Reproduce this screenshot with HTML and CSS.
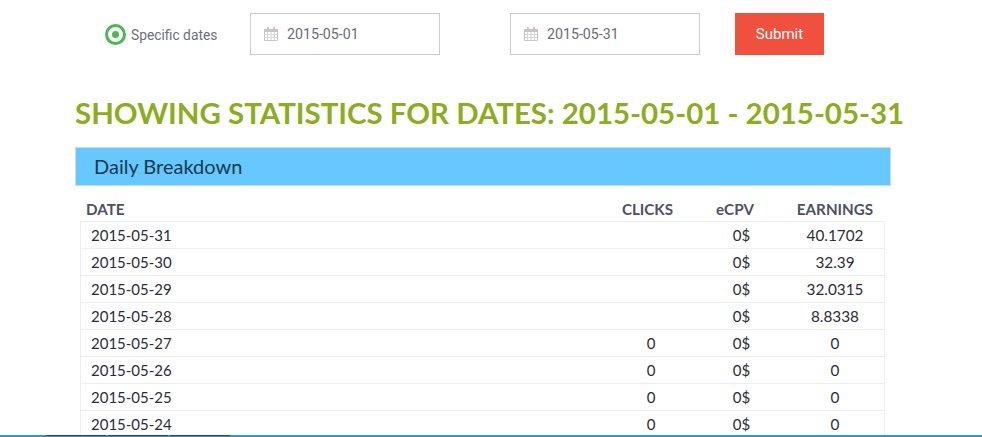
FILE: index.html
```html
<!DOCTYPE html>
<html lang="en">
<head>
<meta charset="utf-8">
<title>Statistics</title>
<link rel="stylesheet" href="styles.css">
</head>
<body>
<main class="page">
  <form class="filter">
    <span class="radio"><span class="radio-dot"></span></span>
    <span class="radio-label">Specific dates</span>
    <div class="date-input first">
      <svg class="cal" viewBox="0 0 14 14" width="14" height="14"><path d="M.5 2.500h13v11H.5z" fill="#fff" stroke="#c9c5c5"/><path d="M0 2h14v3H0z" fill="#c9c5c5"/><path d="M3 0h2v3H3zM9 0h2v3H9z" fill="#c9c5c5"/><path d="M3.500 5v8M7 5v8M10.500 5v8M1 7.500h12M1 10.500h12" stroke="#d8d5d5" fill="none"/></svg>
      <span>2015-05-01</span>
    </div>
    <div class="date-input second">
      <svg class="cal" viewBox="0 0 14 14" width="14" height="14"><path d="M.5 2.500h13v11H.5z" fill="#fff" stroke="#c9c5c5"/><path d="M0 2h14v3H0z" fill="#c9c5c5"/><path d="M3 0h2v3H3zM9 0h2v3H9z" fill="#c9c5c5"/><path d="M3.500 5v8M7 5v8M10.500 5v8M1 7.500h12M1 10.500h12" stroke="#d8d5d5" fill="none"/></svg>
      <span>2015-05-31</span>
    </div>
    <button class="submit" type="button">Submit</button>
  </form>
  <h1 class="title">SHOWING STATISTICS FOR DATES: 2015-05-01 - 2015-05-31</h1>
  <section class="panel">
    <h2 class="panel-head">Daily Breakdown</h2>
    <div class="table-head">
      <span class="c-date">DATE</span><span class="c-clicks">CLICKS</span><span class="c-ecpv">eCPV</span><span class="c-earn">EARNINGS</span>
    </div>
    <div class="rows">
      <div class="row"><span class="c-date">2015-05-31</span><span class="c-clicks"></span><span class="c-ecpv">0$</span><span class="c-earn">40.1702</span></div>
      <div class="row"><span class="c-date">2015-05-30</span><span class="c-clicks"></span><span class="c-ecpv">0$</span><span class="c-earn">32.39</span></div>
      <div class="row"><span class="c-date">2015-05-29</span><span class="c-clicks"></span><span class="c-ecpv">0$</span><span class="c-earn">32.0315</span></div>
      <div class="row"><span class="c-date">2015-05-28</span><span class="c-clicks"></span><span class="c-ecpv">0$</span><span class="c-earn">8.8338</span></div>
      <div class="row"><span class="c-date">2015-05-27</span><span class="c-clicks">0</span><span class="c-ecpv">0$</span><span class="c-earn">0</span></div>
      <div class="row"><span class="c-date">2015-05-26</span><span class="c-clicks">0</span><span class="c-ecpv">0$</span><span class="c-earn">0</span></div>
      <div class="row"><span class="c-date">2015-05-25</span><span class="c-clicks">0</span><span class="c-ecpv">0$</span><span class="c-earn">0</span></div>
      <div class="row"><span class="c-date">2015-05-24</span><span class="c-clicks">0</span><span class="c-ecpv">0$</span><span class="c-earn">0</span></div>
    </div>
  </section>
</main>
<div class="bottom-bar">
  <span class="bar-tab"></span><span class="bar-tab"></span><span class="bar-tab"></span>
</div>
</body>
</html>
```
FILE: styles.css
```css
html, body { margin: 0; padding: 0; height: 437px; overflow: hidden; background: #fff; }
body { font-family: Lato, sans-serif; color: #2c2c3a; display: flex; flex-direction: column; }
.page { height: 435px; overflow: hidden; padding: 13px 0 0 75px; box-sizing: border-box; flex: none; }
.filter { display: flex; align-items: center; height: 42px; padding-left: 30px; font-family: Roboto, sans-serif; }
.radio { width: 21px; height: 21px; border: 3px solid #4cb850; border-radius: 50%; box-sizing: border-box; display: flex; align-items: center; justify-content: center; flex: none; }
.radio-dot { width: 7px; height: 7px; background: #4cb850; border-radius: 50%; }
.radio-label { font-size: 13.8px; color: #6b6f78; margin-left: 5px; width: 86px; margin-top: 2px; flex: none; white-space: nowrap; }
.date-input { width: 190px; height: 42px; border: 1px solid #ccc; box-sizing: border-box; display: flex; align-items: center; padding-left: 13px; font-size: 14.2px; color: #6b6b73; flex: none; }
.date-input.first { margin-left: 33px; }
.date-input.second { margin-left: 70px; }
.cal { margin-right: 9px; flex: none; }
.submit { width: 89px; height: 42px; margin-left: 35px; border: 0; background: #f0503e; color: #fff; font: 15px Roboto, sans-serif; padding: 0; }
.title { margin: 40px 0 0; font-size: 29.45px; line-height: 36px; font-weight: 700; color: #8bad1f; white-space: nowrap; }
.panel { width: 816px; margin-top: 16px; }
.panel-head { margin: 0; height: 39px; box-sizing: border-box; background: #66c8ff; border: 1px solid #c5dff0; font-size: 20px; font-weight: 400; line-height: 36px; padding-left: 18px; color: #173a4e; }
.table-head { display: flex; height: 35px; box-sizing: border-box; padding: 14px 6px 0 5px; font-size: 15.2px; line-height: 18px; font-weight: 700; color: #4c5264; }
.table-head .c-date { padding-left: 6px; }
.table-head .c-clicks { width: 75px; }
.table-head .c-ecpv { width: 100px; }
.table-head .c-earn { width: 100px; }
.rows { margin: 0 5px; width: 805px; box-sizing: border-box; border: 1px solid #eee; border-bottom: 0; border-top: 0; }
.row { display: flex; height: 27px; box-sizing: border-box; align-items: center; border-top: 1px solid #eee; font-size: 15px; color: #2c2c3a; }
.row > :first-child { padding-left: 10px; }
.row .c-clicks { width: 92px; }
.row .c-ecpv { width: 89px; }
.row .c-earn { width: 98px; font-size: 15.3px; }
.c-date { flex: 1; box-sizing: border-box; }
.c-clicks, .c-ecpv, .c-earn { text-align: center; flex: none; }
.bottom-bar { height: 2px; background: #2f9ad0; flex: none; display: flex; padding-left: 46px; gap: 2px; }
.bar-tab { width: 60px; height: 1px; background: #33414a; }
```
